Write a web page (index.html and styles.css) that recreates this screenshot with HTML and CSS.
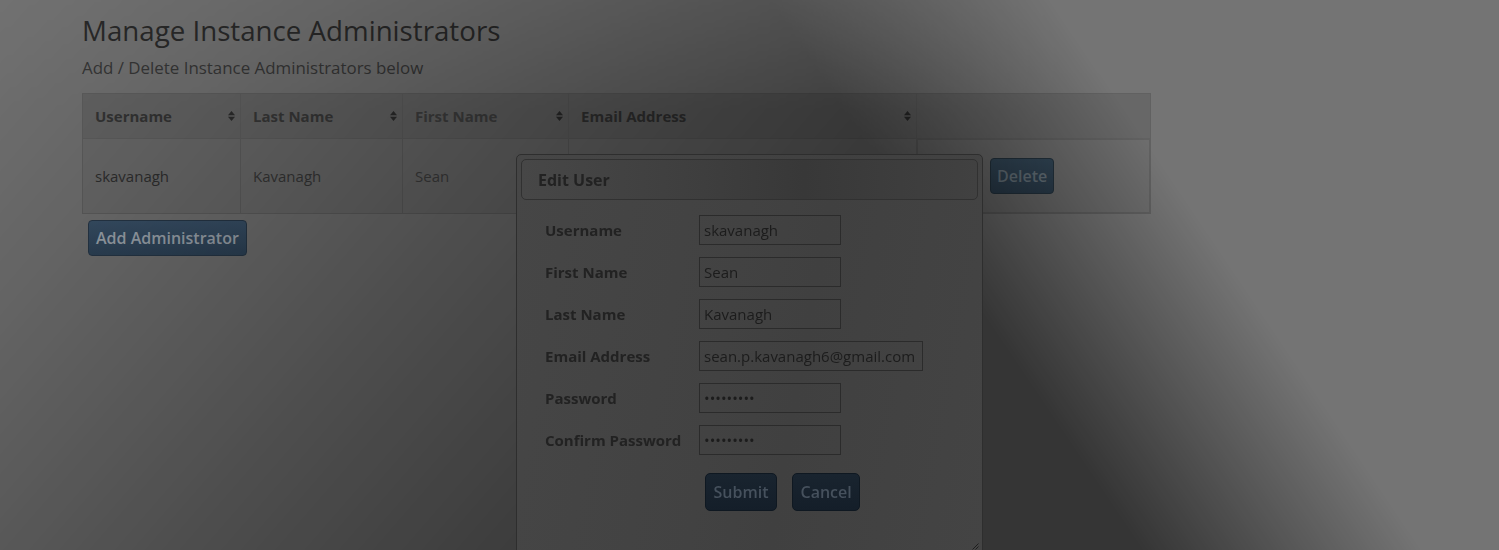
FILE: index.html
```html
<!DOCTYPE html>
<html lang="en">
<head>
<meta charset="utf-8">
<title>Manage Instance Administrators</title>
<link rel="stylesheet" href="styles.css">
</head>
<body>
<main class="page">
  <h1 class="title">Manage Instance Administrators</h1>
  <p class="subtitle">Add / Delete Instance Administrators below</p>
  <table class="admins">
    <colgroup>
      <col class="c-user"><col class="c-last"><col class="c-first"><col class="c-email"><col class="c-act">
    </colgroup>
    <thead>
      <tr>
        <th><div class="th-in"><span>Username</span><svg class="sort" viewBox="0 0 7 10" width="7" height="10"><polygon points="0,4.3 3.5,0 7,4.3"/><polygon points="0,5.7 3.5,10 7,5.7"/></svg></div></th>
        <th><div class="th-in"><span>Last Name</span><svg class="sort" viewBox="0 0 7 10" width="7" height="10"><polygon points="0,4.3 3.5,0 7,4.3"/><polygon points="0,5.7 3.5,10 7,5.7"/></svg></div></th>
        <th><div class="th-in"><span>First Name</span><svg class="sort" viewBox="0 0 7 10" width="7" height="10"><polygon points="0,4.3 3.5,0 7,4.3"/><polygon points="0,5.7 3.5,10 7,5.7"/></svg></div></th>
        <th><div class="th-in"><span>Email Address</span><svg class="sort" viewBox="0 0 7 10" width="7" height="10"><polygon points="0,4.3 3.5,0 7,4.3"/><polygon points="0,5.7 3.5,10 7,5.7"/></svg></div></th>
        <th></th>
      </tr>
    </thead>
    <tbody>
      <tr>
        <td>skavanagh</td>
        <td>Kavanagh</td>
        <td>Sean</td>
        <td></td>
        <td class="actions"><button class="btn btn-edit" aria-label="Edit"></button><button class="btn btn-del">Delete</button></td>
      </tr>
    </tbody>
  </table>
  <button class="btn btn-add">Add Administrator</button>
</main>

<div class="shade"><div class="shade-in"></div></div>

<section class="dialog">
  <header class="dialog-bar">Edit User</header>
  <div class="dialog-body">
    <form class="form">
      <label class="lbl">Username</label><input class="field" type="text" value="skavanagh">
      <label class="lbl">First Name</label><input class="field" type="text" value="Sean">
      <label class="lbl">Last Name</label><input class="field" type="text" value="Kavanagh">
      <label class="lbl">Email Address</label><input class="field field-wide" type="text" value="sean.p.kavanagh6@gmail.com">
      <label class="lbl">Password</label><input class="field" type="password" value="secret123">
      <label class="lbl">Confirm Password</label><input class="field" type="password" value="secret123">
      <div class="actions-row"><button type="button" class="dbtn">Submit</button><button type="button" class="dbtn">Cancel</button></div>
    </form>
  </div>
  <svg class="grip" viewBox="0 0 8 8" width="8" height="8"><path d="M7.5 1.5 L1.5 7.5 M7.5 4.5 L4.5 7.5" stroke="#1e1e1e" stroke-width="1"/></svg>
</section>
</body>
</html>
```

FILE: styles.css
```css
html, body {
  margin: 0;
  padding: 0;
  overflow: hidden;
  height: 100%;
}

body {
  background: #747474;
  font-family: "Open Sans", "Liberation Sans", sans-serif;
  color: #303030;
}

.page {
  padding: 13px 0 0 82px;
}

.title {
  margin: 0;
  font-size: 27.7px;
  line-height: 34px;
  font-weight: 400;
  color: #2a2a2a;
}

.subtitle {
  margin: 10px 0 0;
  font-size: 16.9px;
  line-height: 22px;
  color: #383838;
}

.admins {
  margin-top: 14px;
  width: 1068px;
  table-layout: fixed;
  border-collapse: collapse;
  border: 1px solid #616161;
  font-size: 15px;
}

.c-user { width: 158px; }
.c-last { width: 162px; }
.c-first { width: 166px; }
.c-email { width: 348px; }
.c-act { width: 234px; }

.admins th {
  background: #676767;
  border: 1px solid #616161;
  padding: 12px 5px 12px 12px;
  line-height: 20px;
  text-align: left;
  font-weight: 700;
  color: #363636;
}

.admins th:nth-child(2) { color: #3a3a3a; }
.admins th:nth-child(3) { color: #424242; }

.th-in {
  display: flex;
  align-items: center;
  justify-content: space-between;
}

.sort {
  fill: #2e2e2e;
  flex: none;
}

.admins td {
  background: #6d6d6d;
  border: 1px solid #616161;
  padding: 18px 12px;
  line-height: 36px;
  color: #303030;
  white-space: nowrap;
  overflow: hidden;
}

.admins td:nth-child(2) { color: #383838; }
.admins td:nth-child(3) { color: #404040; }

.actions {
  display: flex;
  gap: 15px;
}

.btn {
  height: 36px;
  box-sizing: border-box;
  padding: 0 7px;
  border: 1px solid #28394a;
  border-radius: 4px;
  background: linear-gradient(#3b536b, #2f455a);
  color: #a2abb4;
  font-family: "Open Sans", "Liberation Sans", sans-serif;
  font-size: 16px;
  font-weight: 600;
  line-height: 34px;
}

.btn-edit {
  width: 45px;
}

.btn-del {
  padding: 0 6px;
  background: linear-gradient(#34495a, #2c3e4e);
  border-color: #25343f;
  color: #69767f;
}

.btn-add {
  margin: 6px 0 0 6px;
}

/* modal backdrop shading */
.shade {
  position: fixed;
  inset: 0;
  z-index: 1;
  pointer-events: none;
  -webkit-mask-image: linear-gradient(311deg, #000 42%, rgba(0,0,0,.62) 66%, rgba(0,0,0,.26) 86%, rgba(0,0,0,.05) 100%);
  mask-image: linear-gradient(311deg, #000 42%, rgba(0,0,0,.62) 66%, rgba(0,0,0,.26) 86%, rgba(0,0,0,.05) 100%);
}

.shade-in {
  width: 100%;
  height: 100%;
  background: linear-gradient(to bottom, rgba(0,0,0,.42) 0, rgba(0,0,0,.54) 110px);
  -webkit-mask-image: linear-gradient(56deg, #000 61%, transparent 76%);
  mask-image: linear-gradient(56deg, #000 61%, transparent 76%);
}

/* dialog */
.dialog {
  position: absolute;
  left: 516px;
  top: 154px;
  width: 467px;
  height: 398px;
  box-sizing: border-box;
  z-index: 2;
  padding: 4px;
  border: 1px solid #2e2e2e;
  border-radius: 5px 5px 0 0;
  background: linear-gradient(100deg, #464646 0%, #424242 45%, #404040 60%, #444444 100%);
}

.dialog-bar {
  height: 41px;
  box-sizing: border-box;
  display: flex;
  align-items: center;
  padding-left: 16px;
  border: 1px solid #313131;
  border-radius: 5px;
  background: linear-gradient(90deg, #474747 0%, #3e3e3e 40%, #383838 62%, #414141 100%);
  font-size: 16px;
  font-weight: 700;
  color: #222;
}

.dialog-body {
  padding: 15px 0 0 24px;
}

.form {
  display: grid;
  grid-template-columns: 154px auto;
  row-gap: 12px;
  align-items: center;
  margin: 0;
}

.lbl {
  font-size: 15px;
  font-weight: 700;
  color: #222;
}

.field {
  justify-self: start;
  width: 142px;
  height: 30px;
  box-sizing: border-box;
  margin: 0;
  padding: 0 4px;
  border: 1px solid #2b2b2b;
  border-radius: 0;
  background: transparent;
  font-family: "Open Sans", "Liberation Sans", sans-serif;
  font-size: 15px;
  color: #1c1c1c;
  outline: none;
}

.field-wide {
  width: 224px;
}

.actions-row {
  grid-column: 2;
  display: flex;
  gap: 15px;
  margin-top: 6px;
  padding-left: 6px;
}

.dbtn {
  height: 38px;
  box-sizing: border-box;
  padding: 0 7.5px;
  border: 1px solid #0f1821;
  border-radius: 5px;
  background: linear-gradient(#19242f, #141e29);
  color: #46515d;
  font-family: "Open Sans", "Liberation Sans", sans-serif;
  font-size: 16px;
  font-weight: 600;
}

.grip {
  position: absolute;
  right: 3px;
  bottom: 1px;
}
```
